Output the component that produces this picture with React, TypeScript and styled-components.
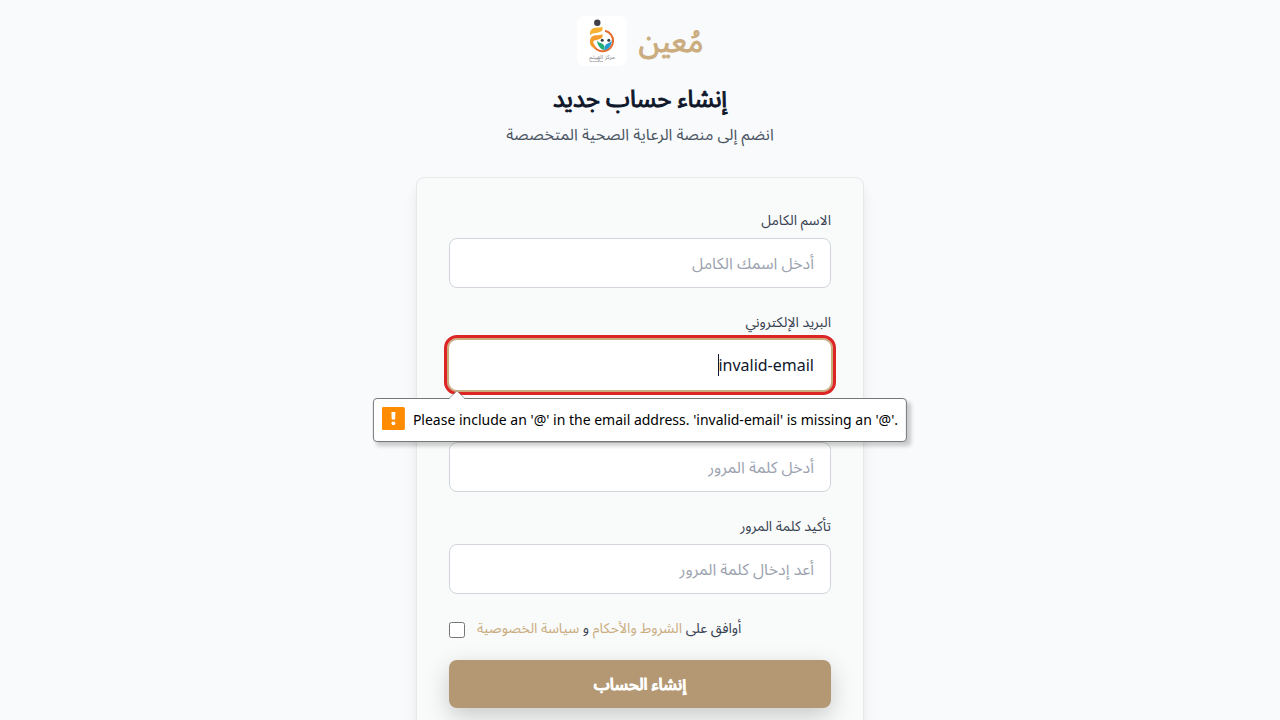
import React, { useState } from 'react';
import styled, { createGlobalStyle, css } from 'styled-components';

const tan = '#cbac7f';

const GlobalStyle = createGlobalStyle`
  *, *::before, *::after { box-sizing: border-box; }
  body {
    margin: 0;
    background: #f8fafc;
    color: #0f172a;
    font-family: "Noto Sans", "Noto Sans Arabic", sans-serif;
    font-size: 16px;
    line-height: 24px;
  }
  h1, p { margin: 0; }
`;

const Page = styled.main`
  display: flex;
  flex-direction: column;
  align-items: center;
  min-height: 100vh;
  padding: 16px;
`;

const Header = styled.header`
  display: flex;
  flex-direction: column;
  align-items: center;
  text-align: center;
  margin-bottom: 31px;
`;

const Brand = styled.div`
  display: flex;
  align-items: center;
  gap: 12px;
  height: 50px;
  margin-bottom: 16px;
`;

const heavy = css`
  font-weight: 400;
  -webkit-text-stroke: 1px currentColor;
`;

const BrandName = styled.span`
  color: ${tan};
  font-size: 30px;
  line-height: 36px;
  ${heavy}
`;

const Title = styled.h1`
  font-size: 24px;
  line-height: 32px;
  margin-bottom: 8px;
  ${heavy}
`;

const Subtitle = styled.p`
  color: #4b5563;
`;

const Card = styled.section`
  width: 100%;
  max-width: 448px;
  padding: 32px;
  background: #f9fbfa;
  border: 1px solid #e5e7eb;
  border-radius: 8px;
  box-shadow: 0 10px 15px -3px rgba(0, 0, 0, 0.1), 0 4px 6px -4px rgba(0, 0, 0, 0.1);
`;

const Form = styled.form`
  display: flex;
  flex-direction: column;
  gap: 24px;
`;

const Field = styled.div`
  position: relative;
  display: flex;
  flex-direction: column;
  gap: 8px;
`;

const Label = styled.label`
  color: #374151;
  font-size: 14px;
  line-height: 20px;
  text-align: right;
`;

const Input = styled.input<{ $invalid?: boolean }>`
  width: 100%;
  height: 50px;
  padding: 12px 16px;
  border: 1px solid #d1d5db;
  border-radius: 8px;
  background: #fff;
  color: #0f172a;
  font: inherit;
  text-align: right;
  &::placeholder { color: #9ca3af; opacity: 1; }
  ${({ $invalid }) =>
    $invalid &&
    css`
      border-color: transparent;
      outline: 3px solid #dc2626;
      outline-offset: 2px;
      box-shadow: 0 0 0 2px ${tan};
    `}
`;

const Caret = styled.span`
  position: absolute;
  right: 112px;
  bottom: 14px;
  width: 1px;
  height: 22px;
  background: #0f172a;
`;

const Bubble = styled.div`
  position: absolute;
  z-index: 1;
  top: 100%;
  left: 50%;
  transform: translateX(-50%);
  display: flex;
  gap: 8px;
  width: max-content;
  height: 44px;
  margin-top: 8px;
  padding: 8px;
  background: #fff;
  border: 1px solid #767676;
  border-radius: 4px;
  box-shadow: 4px 4px 4px rgba(0, 0, 0, 0.2);
  color: #000;
  font-size: 14px;
  line-height: 26px;
`;

const BubbleArrow = styled.svg`
  position: absolute;
  top: -8px;
  left: 75px;
`;

const Terms = styled.div`
  display: flex;
  align-items: flex-start;
  gap: 12px;
  font-size: 14px;
  line-height: 20px;
`;

const Checkbox = styled.input`
  width: 16px;
  height: 16px;
  margin: 4px 0 0;
`;

const TermsLabel = styled.label`
  color: #374151;
`;

const TextLink = styled.a`
  color: ${tan};
  text-decoration: none;
`;

const Actions = styled.div`
  display: flex;
  flex-direction: column;
  gap: 22px;
`;

const SubmitButton = styled.button`
  width: 100%;
  height: 48px;
  border: 0;
  border-radius: 8px;
  background: #b39873;
  color: #fff;
  font: inherit;
  ${heavy}
  font-weight: 500;
  box-shadow: 0 8px 25px rgba(0, 0, 0, 0.2);
`;

const Logo = () => (
  <svg width="50" height="50" viewBox="0 0 50 50" aria-hidden="true">
    <rect width="50" height="50" rx="8" fill="#fff" />
    <path d="M28 14.700a10.400 10.400 0 1 1-12.300 13" fill="none" stroke="#e66a2c" strokeWidth="2" />
    <circle cx="20.300" cy="6.700" r="3.200" fill="#3f4048" />
    <path d="M13 18.300c0-4.300 2-6 5.500-6.500 3.300-.3 4.500 0 7-1v3.200c-1.300 2-3.600 2.600-6.300 2.900-2.700.1-4.600.5-6.200 2.400z" fill="#f8b133" />
    <path d="M13 27c-.2-5 1.500-7.300 5.500-7.800 3.300-.3 4.500-.1 7-1.300v3.200c-1.300 2-3.600 2.600-6 2.900-2.500.2-3.500 1-3.200 3 .3 2.300 1.400 4.400 3.200 6.200C15.500 31.800 13.200 30 13 27z" fill="#f59d2c" />
    <circle cx="25.200" cy="24.300" r="1.500" fill="#333b42" />
    <circle cx="31.800" cy="24.300" r="1.500" fill="#333b42" />
    <path d="M20 24.500c1.500 2 2.900 2.400 5 3 2.200.8 3 3.200 2.500 6.800-4-.8-6.900-4.500-7.500-9.800z" fill="#22ae78" />
    <path d="M35 24c-1.300 2.200-2.600 2.900-4.500 3.500-2.300.8-3.300 3.200-2.800 6.800 4.200-1.200 6.800-5 7.300-10.300z" fill="#259bd3" />
    <text x="25" y="43" textAnchor="middle" fontFamily="Noto Sans Arabic, sans-serif" fontSize="6" fill="#85858a" direction="rtl">مركز الهيثم</text>
    <path d="M13 45.500h13" stroke="#b0b0b4" strokeDasharray="2 .4" />
  </svg>
);

const WarningIcon = () => (
  <svg width="23" height="23" viewBox="0 0 23 23" aria-hidden="true">
    <rect width="23" height="23" rx="1.500" fill="#ff8c00" />
    <path d="M9.500 5h4l-.3 7.500h-3.400z" fill="#fff" />
    <circle cx="11.500" cy="16.300" r="1.900" fill="#fff" />
  </svg>
);

export default function App() {
  const [email, setEmail] = useState('invalid-email');
  return (
    <>
      <GlobalStyle />
      <Page>
        <Header>
          <Brand>
            <Logo />
            <BrandName lang="ar">مُعين</BrandName>
          </Brand>
          <Title dir="rtl">إنشاء حساب جديد</Title>
          <Subtitle dir="rtl">انضم إلى منصة الرعاية الصحية المتخصصة</Subtitle>
        </Header>
        <Card>
          <Form noValidate>
            <Field>
              <Label htmlFor="name">الاسم الكامل</Label>
              <Input id="name" type="text" dir="rtl" placeholder="أدخل اسمك الكامل" />
            </Field>
            <Field>
              <Label htmlFor="email">البريد الإلكتروني</Label>
              <Input
                id="email"
                type="email"
                dir="rtl"
                $invalid
                aria-describedby="email-error"
                value={email}
                onChange={(e) => setEmail(e.target.value)}
              />
              <Caret />
              <Bubble id="email-error" role="alert">
                <BubbleArrow width="16" height="9" viewBox="0 0 16 9" aria-hidden="true">
                  <path d="M0 9V8L8 0l8 8v1z" fill="#fff" />
                  <path d="M0 7.500L8 0l8 7.500" fill="none" stroke="#8a8a8a" strokeWidth=".8" />
                </BubbleArrow>
                <WarningIcon />
                <span>Please include an '@' in the email address. 'invalid-email' is missing an '@'.</span>
              </Bubble>
            </Field>
            <Field>
              <Label htmlFor="password">كلمة المرور</Label>
              <Input id="password" type="password" dir="rtl" placeholder="أدخل كلمة المرور" />
            </Field>
            <Field>
              <Label htmlFor="confirm">تأكيد كلمة المرور</Label>
              <Input id="confirm" type="password" dir="rtl" placeholder="أعد إدخال كلمة المرور" />
            </Field>
            <Actions>
              <Terms>
                <Checkbox id="terms" type="checkbox" />
                <TermsLabel htmlFor="terms" dir="rtl">
                  أوافق على <TextLink href="#terms">الشروط والأحكام</TextLink> و{' '}
                  <TextLink href="#privacy">سياسة الخصوصية</TextLink>
                </TermsLabel>
              </Terms>
              <SubmitButton type="submit">إنشاء الحساب</SubmitButton>
            </Actions>
          </Form>
        </Card>
      </Page>
    </>
  );
}
